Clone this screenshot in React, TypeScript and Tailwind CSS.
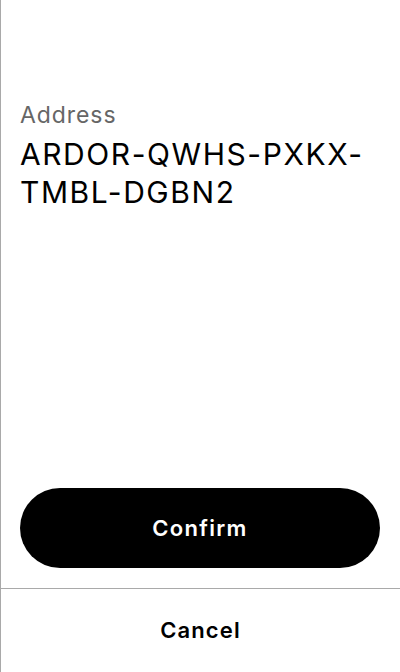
import React from "react";

export default function App() {
  return (
    <div
      className="flex h-[672px] w-[400px] flex-col border-l border-[#a9a9a9] bg-white text-black tracking-[0.05em]"
      style={{ fontFamily: "Inter, 'Noto Sans', sans-serif" }}
    >
      {/* Address block */}
      <div className="flex-1 pl-[19px] pr-5 pt-[101px]">
        <p className="text-[23px] leading-[28px] tracking-[0.04em] text-[#666666]">Address</p>
        <p className="mt-[6px] text-[30px] leading-[38px] tracking-[0.052em] text-black">
          ARDOR-QWHS-PXKX-
          <br />
          TMBL-DGBN2
        </p>
      </div>

      {/* Confirm */}
      <div className="pb-5 pl-[19px] pr-5">
        <button className="flex h-[80px] w-full items-center justify-center rounded-full bg-black text-[22px] font-semibold tracking-[0.06em] text-white">
          Confirm
        </button>
      </div>

      {/* Cancel */}
      <div className="flex h-[84px] items-center justify-center border-t border-[#a9a9a9]">
        <button className="text-[22px] font-semibold tracking-[0.05em] text-black">Cancel</button>
      </div>
    </div>
  );
}
